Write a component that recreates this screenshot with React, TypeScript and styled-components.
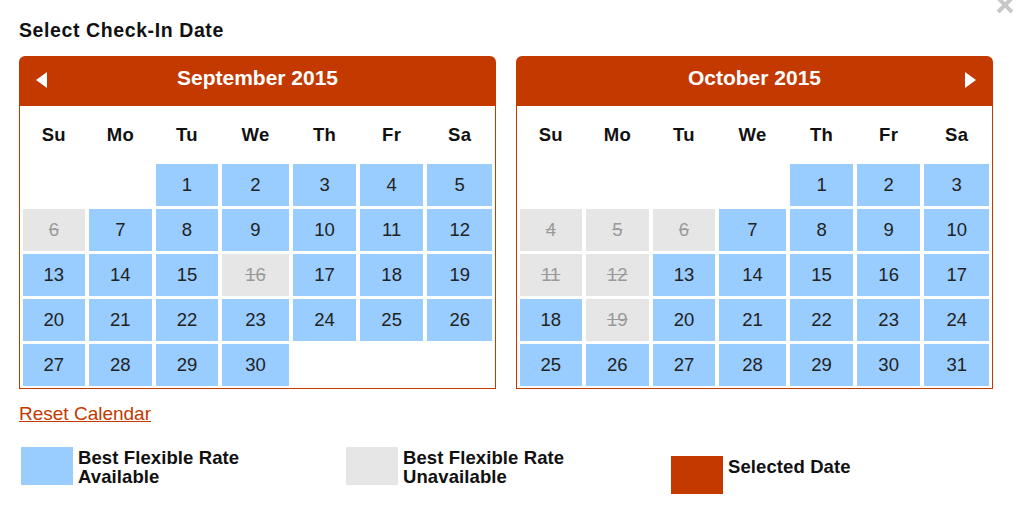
import styled, { createGlobalStyle } from "styled-components";

const RED = "#c33900";
const BLUE = "#99ccff";
const GREY = "#e6e6e6";

const GlobalStyle = createGlobalStyle`
  body {
    margin: 0;
    background: #fff;
    font-family: "Liberation Sans", Arial, Helvetica, sans-serif;
    color: #111;
  }
`;

const Page = styled.div`
  position: relative;
  width: 1024px;
  height: 511px;
  box-sizing: border-box;
  padding: 19px 19px 0;
  overflow: hidden;
`;

const Close = styled.button`
  position: absolute;
  top: -4px;
  right: 10px;
  width: 18px;
  height: 18px;
  padding: 0;
  border: 0;
  background: none;
  cursor: pointer;
`;

const Title = styled.h1`
  margin: 0;
  font-size: 19.5px;
  line-height: 22px;
  font-weight: bold;
  letter-spacing: 0.6px;
`;

const Calendars = styled.div`
  display: flex;
  gap: 20px;
  margin-top: 15px;
`;

const Calendar = styled.div`
  width: 477px;
`;

const Header = styled.div`
  display: grid;
  grid-template-columns: 45px 1fr 45px;
  height: 50px;
  background: ${RED};
  border-radius: 6px 6px 0 0;
  color: #fff;
`;

const Month = styled.div`
  text-align: center;
  font-size: 21px;
  font-weight: bold;
  line-height: 44px;
`;

const Arrow = styled.span`
  display: flex;
  align-items: center;
  justify-content: center;
  height: 48px;
  cursor: pointer;
`;

const Body = styled.div`
  border: 1px solid ${RED};
  border-top: 0;
  padding: 0 3px 2px;
`;

const cols = "62fr 64fr 62fr 68fr 63fr 64fr 65fr";

const WeekRow = styled.div`
  display: grid;
  grid-template-columns: ${cols};
  column-gap: 4px;
  height: 58px;
  align-items: center;
  text-align: center;
  font-size: 18.5px;
  font-weight: bold;
  letter-spacing: 0.3px;
`;

const Days = styled.div`
  display: grid;
  grid-template-columns: ${cols};
  grid-auto-rows: 42px;
  column-gap: 4px;
  row-gap: 3px;
`;

type Status = "open" | "closed" | "empty";

const Day = styled.div<{ $status: Status }>`
  display: flex;
  align-items: center;
  justify-content: center;
  font-size: 18.5px;
  background: ${(p) =>
    p.$status === "open" ? BLUE : p.$status === "closed" ? GREY : "transparent"};
  color: ${(p) => (p.$status === "closed" ? "#9a9a9a" : "#222")};
  text-decoration: ${(p) => (p.$status === "closed" ? "line-through" : "none")};
  cursor: ${(p) => (p.$status === "open" ? "pointer" : "default")};
`;

const Reset = styled.a`
  display: inline-block;
  margin-top: 14px;
  font-size: 19px;
  line-height: 22px;
  color: ${RED};
  text-decoration: underline;
`;

const Legend = styled.div`
  display: flex;
  margin-top: 22px;
  padding-left: 2px;
`;

const LegendItem = styled.div<{ $drop?: number }>`
  display: flex;
  gap: 5px;
  width: 325px;
  margin-top: ${(p) => p.$drop ?? 0}px;
`;

const Swatch = styled.div<{ $color: string }>`
  width: 52px;
  height: 38px;
  flex: none;
  background: ${(p) => p.$color};
`;

const LegendText = styled.div`
  font-size: 18.5px;
  line-height: 19px;
  font-weight: bold;
  letter-spacing: 0.1px;
  padding-top: 1px;
`;

const weekdays = ["Su", "Mo", "Tu", "We", "Th", "Fr", "Sa"];

type MonthData = {
  name: string;
  offset: number;
  length: number;
  closed: number[];
  prev?: boolean;
  next?: boolean;
};

const months: MonthData[] = [
  { name: "September 2015", offset: 2, length: 30, closed: [6, 16], prev: true },
  { name: "October 2015", offset: 4, length: 31, closed: [4, 5, 6, 11, 12, 19], next: true },
];

function Triangle({ dir }: { dir: "left" | "right" }) {
  return (
    <svg width="11" height="16" viewBox="0 0 11 16">
      <polygon
        points={dir === "left" ? "11,0 11,16 0,8" : "0,0 0,16 11,8"}
        fill="#fff"
      />
    </svg>
  );
}

function MonthView({ m }: { m: MonthData }) {
  const cells: { day?: number; status: Status }[] = [];
  for (let i = 0; i < m.offset; i++) cells.push({ status: "empty" });
  for (let d = 1; d <= m.length; d++)
    cells.push({ day: d, status: m.closed.includes(d) ? "closed" : "open" });
  while (cells.length % 7) cells.push({ status: "empty" });

  return (
    <Calendar>
      <Header>
        <Arrow>{m.prev && <Triangle dir="left" />}</Arrow>
        <Month>{m.name}</Month>
        <Arrow>{m.next && <Triangle dir="right" />}</Arrow>
      </Header>
      <Body>
        <WeekRow>
          {weekdays.map((w) => (
            <div key={w}>{w}</div>
          ))}
        </WeekRow>
        <Days>
          {cells.map((c, i) => (
            <Day key={i} $status={c.status}>
              {c.day}
            </Day>
          ))}
        </Days>
      </Body>
    </Calendar>
  );
}

export default function App() {
  return (
    <Page>
      <GlobalStyle />
      <Close aria-label="Close">
        <svg width="18" height="18" viewBox="0 0 18 18">
          <path d="M2 2 L16 16 M16 2 L2 16" stroke="#c8c8c8" strokeWidth="4" />
        </svg>
      </Close>
      <Title>Select Check-In Date</Title>
      <Calendars>
        {months.map((m) => (
          <MonthView key={m.name} m={m} />
        ))}
      </Calendars>
      <Reset href="#">Reset Calendar</Reset>
      <Legend>
        <LegendItem>
          <Swatch $color={BLUE} />
          <LegendText>
            Best Flexible Rate
            <br />
            Available
          </LegendText>
        </LegendItem>
        <LegendItem>
          <Swatch $color={GREY} />
          <LegendText>
            Best Flexible Rate
            <br />
            Unavailable
          </LegendText>
        </LegendItem>
        <LegendItem $drop={9}>
          <Swatch $color={RED} />
          <LegendText>Selected Date</LegendText>
        </LegendItem>
      </Legend>
    </Page>
  );
}
